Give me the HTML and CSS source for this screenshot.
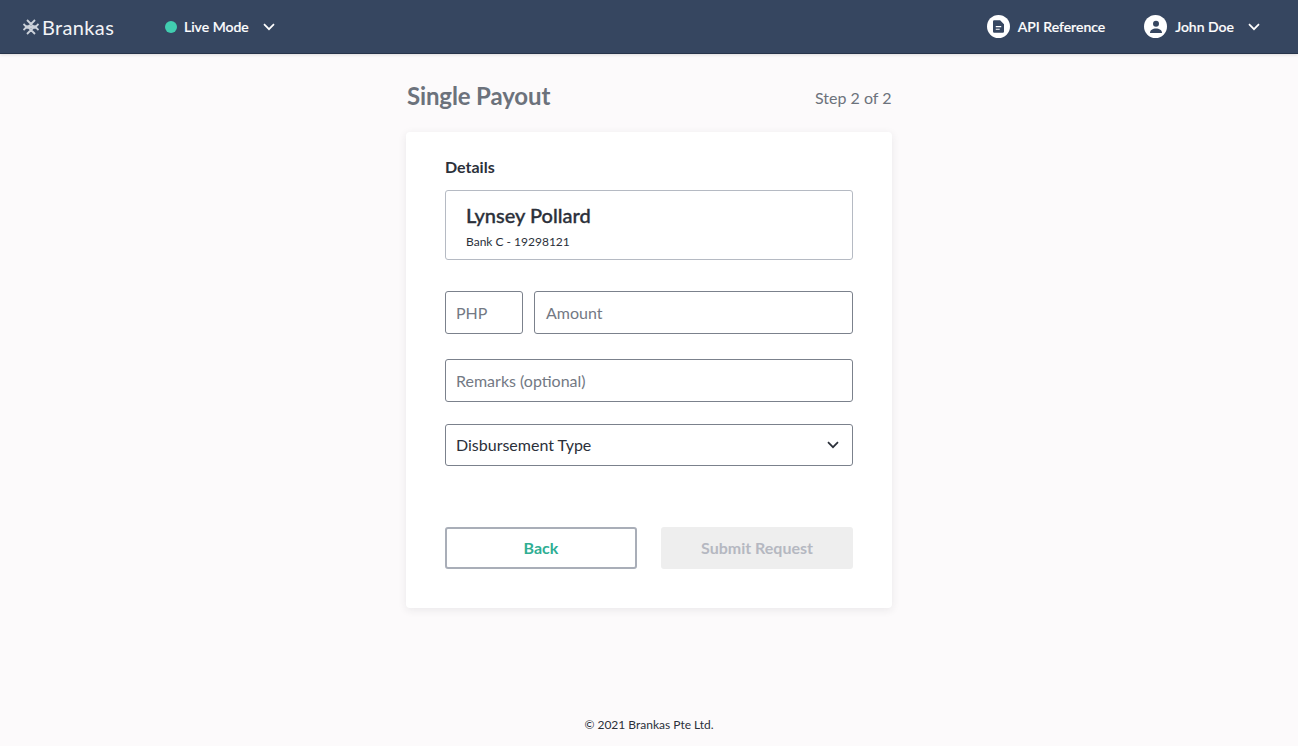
FILE: index.html
```html
<!DOCTYPE html>
<html lang="en">
  <head>
    <meta charset="UTF-8" />
    <meta name="viewport" content="width=device-width, initial-scale=1.0" />
    <title>Single Payout</title>
    <link rel="stylesheet" href="styles.css">
  </head>
  <body>
    <header class="navbar">
      <div class="nav-left">
        <div class="logo">
          <svg class="logo-mark" viewBox="0 0 16 16" width="16" height="16" fill="none" stroke="#cdd2da" stroke-width="1.800">
            <path d="M4 1 12 9M12 1 4 9M4 7 12 15M12 7 4 15M.5 5 4.500 9M.5 11 4.500 7M15.500 5 11.500 9M15.500 11 11.500 7M6 8H10" />
          </svg>
          <span>Brankas</span>
        </div>
        <div class="mode">
          <span class="mode-dot"></span>
          <span>Live Mode</span>
          <svg class="chevron" viewBox="0 0 12 8" width="12" height="8" fill="none" stroke="#fff" stroke-width="1.7">
            <path d="M1 1.200 6 6.200 11 1.200" />
          </svg>
        </div>
      </div>
      <div class="nav-right">
        <div class="nav-item">
          <span class="nav-icon">
            <svg viewBox="0 0 14 16" width="11" height="13">
              <path fill="#364660" fill-rule="evenodd" d="M1.500 0H9l5 5v9.500a1.500 1.500 0 0 1-1.500 1.500h-11A1.500 1.500 0 0 1 0 14.500v-13A1.500 1.500 0 0 1 1.500 0ZM3.500 7.500v1.400h7V7.500ZM3.500 10.800v1.400h5v-1.400Z" />
            </svg>
          </span>
          <span>API Reference</span>
        </div>
        <div class="nav-item user">
          <span class="nav-icon">
            <svg viewBox="0 0 14 14" width="14" height="14" fill="#364660">
              <circle cx="7" cy="3.800" r="3" />
              <path d="M1 13c0-3 2.700-4.500 6-4.500s6 1.500 6 4.500Z" />
            </svg>
          </span>
          <span>John Doe</span>
          <svg class="chevron" viewBox="0 0 12 8" width="12" height="8" fill="none" stroke="#fff" stroke-width="1.7">
            <path d="M1 1.200 6 6.200 11 1.200" />
          </svg>
        </div>
      </div>
    </header>

    <main class="content">
      <div class="page-title">
        <h1>Single Payout</h1>
        <span class="step">Step 2 of 2</span>
      </div>

      <section class="card">
        <h2>Details</h2>
        <div class="recipient">
          <div class="recipient-name">Lynsey Pollard</div>
          <div class="recipient-bank">Bank C - 19298121</div>
        </div>

        <div class="amount-row">
          <div class="field currency">PHP</div>
          <div class="field amount">Amount</div>
        </div>
        <div class="field remarks">Remarks (optional)</div>
        <div class="field select">
          <span>Disbursement Type</span>
          <svg viewBox="0 0 12 8" width="12" height="8" fill="none" stroke="#2b303a" stroke-width="1.7">
            <path d="M1 1.200 6 6.200 11 1.200" />
          </svg>
        </div>

        <div class="actions">
          <button class="btn back">Back</button>
          <button class="btn submit">Submit Request</button>
        </div>
      </section>
    </main>

    <footer class="footer">© 2021 Brankas Pte Ltd.</footer>
  </body>
</html>
```

FILE: styles.css
```css
* {
  margin: 0;
  padding: 0;
  box-sizing: border-box;
}

body {
  font-family: "Lato", sans-serif;
  height: 746px;
  overflow: hidden;
  background-color: #fcfafb;
  color: #2b303a;
  display: flex;
  flex-direction: column;
}

.navbar {
  height: 54px;
  flex-shrink: 0;
  background-color: #364660;
  border-bottom: 1px solid #27344a;
  box-shadow: 0 1px 3px rgba(0, 0, 0, 0.12);
  color: #fff;
  display: flex;
  justify-content: space-between;
  align-items: center;
  padding: 0 38px 0 23px;
  font-size: 14px;
  font-weight: 500;
  -webkit-text-stroke: 0.2px;
}

.nav-left,
.nav-right,
.logo,
.mode,
.nav-item {
  display: flex;
  align-items: center;
}

.logo {
  font-size: 20px;
  font-weight: 400;
  letter-spacing: 0.35px;
  color: #f2f3f6;
  width: 142px;
  -webkit-text-stroke: 0;
}

.logo-mark {
  margin-right: 3px;
}

.mode-dot {
  width: 12px;
  height: 12px;
  border-radius: 50%;
  background-color: #41cdb0;
  margin-right: 7px;
}

.mode .chevron {
  margin-left: 14px;
}

.nav-item.user {
  margin-left: 39px;
}

.nav-item.user .chevron {
  margin-left: 14px;
}

.nav-icon {
  width: 23px;
  height: 23px;
  border-radius: 50%;
  background-color: #fff;
  display: flex;
  justify-content: center;
  align-items: center;
  margin-right: 8px;
}

.content {
  width: 486px;
  margin: 0 auto;
  flex: 1;
}

.page-title {
  display: flex;
  justify-content: space-between;
  align-items: baseline;
  padding: 27px 1px 0;
  height: 78px;
}

h1 {
  font-size: 24px;
  font-weight: 700;
  color: #6c727c;
  letter-spacing: -0.13px;
}

.step {
  font-size: 16px;
  color: #6c727c;
  position: relative;
  top: -1px;
  left: 0.5px;
}

.card {
  background: white;
  border-radius: 4px;
  box-shadow: 0 2px 8px rgba(40, 40, 60, 0.09);
  height: 476px;
  padding: 25px 39px 0;
}

h2 {
  font-size: 16px;
  font-weight: 700;
  line-height: 19px;
  margin-bottom: 14px;
}

.recipient {
  height: 70px;
  border: 1px solid #b5bac3;
  border-radius: 3px;
  padding: 12px 20px 0;
}

.recipient-name {
  font-size: 20px;
  font-weight: 500;
  line-height: 25px;
  -webkit-text-stroke: 0.35px;
}

.recipient-bank {
  font-size: 12px;
  line-height: 15px;
  margin-top: 6px;
}

.field {
  height: 43px;
  border: 1px solid #7b818c;
  border-radius: 3px;
  padding: 0 10px;
  font-size: 16px;
  color: #737984;
  display: flex;
  align-items: center;
}

.amount-row {
  display: flex;
  gap: 11px;
  margin-top: 31px;
}

.currency {
  width: 78px;
}

.amount {
  flex: 1;
  padding-left: 11px;
}

.remarks {
  margin-top: 25px;
}

.select {
  height: 42px;
  margin-top: 22px;
  padding-bottom: 2px;
  justify-content: space-between;
  color: #2b303a;
}

.select svg {
  margin: 1px 3px 0 0;
}

.actions {
  display: flex;
  justify-content: space-between;
  margin-top: 61px;
}

.btn {
  width: 192px;
  height: 42px;
  padding-bottom: 2px;
  border-radius: 3px;
  font-family: "Lato", sans-serif;
  font-size: 16px;
  font-weight: 700;
}

.back {
  background: white;
  border: 2px solid #a9aeb8;
  color: #2fae93;
}

.submit {
  background: #eeeeee;
  border: none;
  color: #b5b8c1;
}

.footer {
  height: 42px;
  flex-shrink: 0;
  text-align: center;
  font-size: 12px;
  color: #2b303a;
  padding-top: 13px;
}
```
